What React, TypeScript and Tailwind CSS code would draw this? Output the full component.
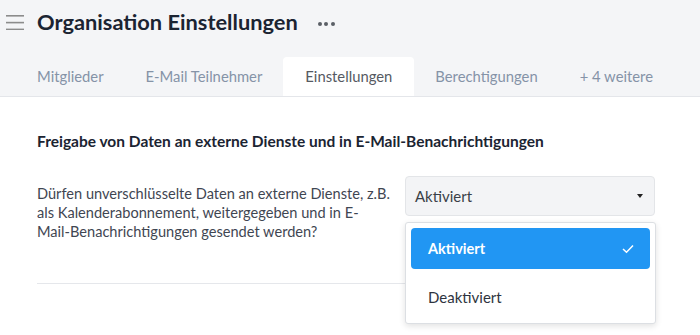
import React from "react";

export default function App() {
  const font = { fontFamily: "Lato, 'Noto Sans', sans-serif" };
  return (
    <div className="w-[700px] h-[335px] bg-white overflow-hidden" style={font}>
      <div className="bg-[#f4f5f7] border-b border-[#e4e6ea]">
        <div className="flex items-center h-[44px] pt-[0px]">
          <div className="w-[37px] flex justify-start pl-[6px]">
            <svg width="18" height="16" viewBox="0 0 18 16">
              <rect x="0" y="1" width="18" height="1.6" fill="#8c8c8c" />
              <rect x="0" y="7.8" width="18" height="1.6" fill="#8c8c8c" />
              <rect x="0" y="14.6" width="18" height="1.6" fill="#8c8c8c" />
            </svg>
          </div>
          <h1 className="text-[21.8px] font-bold text-[#1b2432] leading-none">Organisation Einstellungen</h1>
          <div className="ml-[20px] flex gap-[2.5px] mt-[3px]">
            <span className="w-[4px] h-[4px] rounded-full bg-[#5a5f66]" />
            <span className="w-[4px] h-[4px] rounded-full bg-[#5a5f66]" />
            <span className="w-[4px] h-[4px] rounded-full bg-[#5a5f66]" />
          </div>
        </div>
        <div className="flex items-end h-[52px] pl-[16px] text-[14.8px]">
          <div className="px-[21px] h-[39px] flex items-center text-[#8593a7]">Mitglieder</div>
          <div className="px-[21px] h-[39px] flex items-center text-[#8593a7]">E-Mail Teilnehmer</div>
          <div className="px-[21px] h-[39px] flex items-center text-[#555a62] bg-white rounded-t-[4px] w-[131px] justify-center">Einstellungen</div>
          <div className="px-[21px] h-[39px] flex items-center text-[#8593a7]">Berechtigungen</div>
          <div className="px-[21px] h-[39px] flex items-center text-[#8593a7]">+ 4 weitere</div>
        </div>
      </div>
      <div className="relative pl-[37px] w-[655px]">
        <h2 className="pt-[34px] text-[15.5px] font-bold text-[#1b2432] leading-[20px]">
          Freigabe von Daten an externe Dienste und in E-Mail-Benachrichtigungen
        </h2>
        <div className="flex mt-[25px] justify-between">
          <p className="w-[364px] pt-[8px] text-[14.6px] leading-[19px] text-[#3f4652]">
            Dürfen unverschlüsselte Daten an externe Dienste, z.B. als Kalenderabonnement, weitergegeben und in E-<span className="whitespace-nowrap">Mail-Benachrichtigungen</span> gesendet werden?
          </p>
          <div className="relative w-[250px]">
            <div className="h-[40px] bg-[#f3f4f6] border border-[#e3e5e8] rounded-[4px] flex items-center pl-[9px] pr-[11px] text-[15px] text-[#3a3f47]">
              <span className="flex-1">Aktiviert</span>
              <svg width="6" height="4" viewBox="0 0 6 4">
                <path d="M0 0 L6 0 L3 4 Z" fill="#222" />
              </svg>
            </div>
            <div className="absolute left-0 top-[46px] w-[251px] bg-white border border-[#dcdfe3] rounded-[3px] shadow-[0_2px_6px_rgba(0,0,0,0.12)] pt-[5px] px-[5px] z-10">
              <div className="h-[41px] bg-[#2196f3] rounded-[4px] flex items-center pl-[17px] pr-[16px] text-white text-[14.5px] font-bold">
                <span className="flex-1">Aktiviert</span>
                <svg width="12" height="10" viewBox="0 0 12 10">
                  <path d="M1 5 L4.5 8.2 L11 1.5" stroke="white" strokeWidth="1.5" fill="none" />
                </svg>
              </div>
              <div className="h-[54px] pt-[2px] flex items-center pl-[17px] text-[15px] text-[#2e3440]">Deaktiviert</div>
            </div>
          </div>
        </div>
        <div className="mt-[42px] border-t border-[#e5e7eb]" />
      </div>
    </div>
  );
}
